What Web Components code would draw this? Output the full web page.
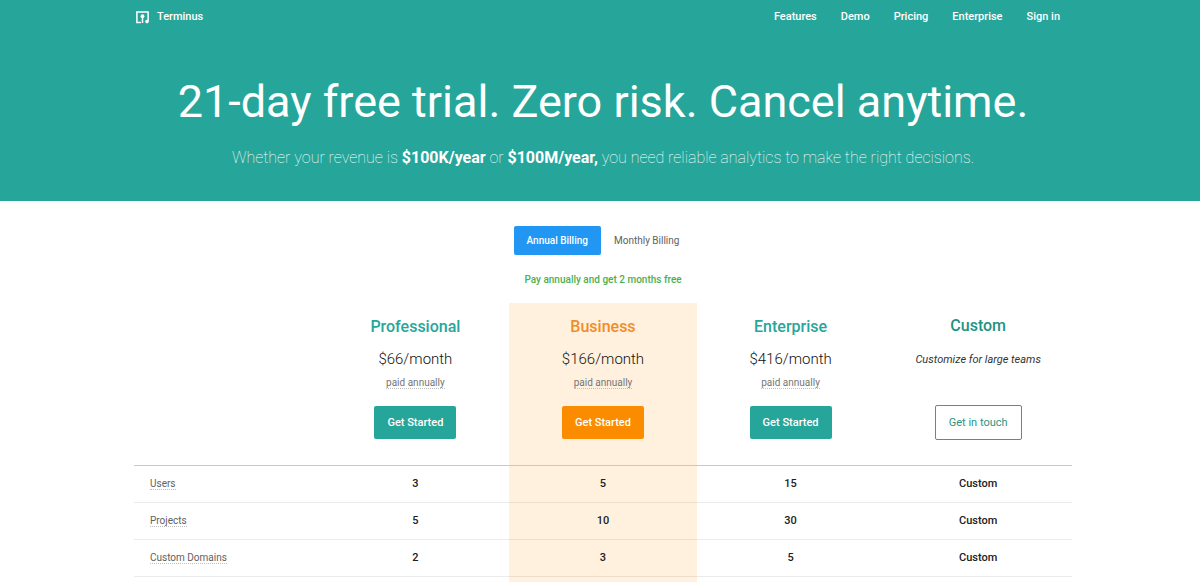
<!DOCTYPE html>
<html lang="en">
<head>
<meta charset="utf-8">
<meta name="viewport" content="width=device-width, initial-scale=1">
<title>Terminus - Pricing</title>
<style>
  body {
    margin: 0;
    background: #fff;
    color: #212121;
    font-family: Roboto, "Liberation Sans", sans-serif;
    font-size: 10px;
    line-height: 16px;
    --teal: #26a69a;
    --orange: #fb8c00;
    --gutter: 6px;
    --content: 938px;
  }
</style>
</head>
<body>
<site-header>
  <a slot="nav" href="#features">Features</a>
  <a slot="nav" href="#demo">Demo</a>
  <a slot="nav" href="#pricing">Pricing</a>
  <a slot="nav" href="#enterprise">Enterprise</a>
  <a slot="nav" href="#signin">Sign in</a>
</site-header>
<main>
  <page-hero>
    <span slot="title">21-day free trial. Zero risk. Cancel anytime.</span>
    Whether your revenue is <b>$100K/year</b> or <b>$100M/year,</b> you need reliable analytics to make the right decisions.
  </page-hero>
  <billing-toggle>Pay annually and get 2 months free</billing-toggle>
  <pricing-table></pricing-table>
</main>

<script>
class SiteHeader extends HTMLElement {
  constructor() {
    super();
    this.attachShadow({ mode: 'open' }).innerHTML = `
      <style>
        :host {
          display: block;
          background: var(--teal);
          color: #fff;
          padding-left: var(--gutter);
        }
        header {
          display: flex;
          justify-content: space-between;
          align-items: center;
          max-width: var(--content);
          height: 34px;
          margin: 0 auto;
        }
        .brand {
          display: flex;
          align-items: center;
          gap: 8px;
          padding-left: 2px;
          color: #fff;
          font-size: 11px;
          font-weight: 500;
          text-decoration: none;
        }
        nav {
          display: flex;
          gap: 24px;
          padding-right: 12px;
        }
        ::slotted(a) {
          color: #fff;
          font-size: 11px;
          font-weight: 500;
          text-decoration: none;
        }
      </style>
      <header>
        <a class="brand" href="#home">
          <svg width="13" height="13" viewBox="0 0 13 13" fill="none" stroke="#fff" stroke-width="1.5" aria-hidden="true">
            <path d="M5 11.4H.9V.9h11.2v9.2"/>
            <path d="M6.5 12V5"/>
            <circle cx="6.5" cy="5.2" r="1.9" fill="#fff" stroke="none"/>
            <circle cx="11" cy="10.6" r="1.8" fill="#fff" stroke="none"/>
          </svg>
          <span>Terminus</span>
        </a>
        <nav><slot name="nav"></slot></nav>
      </header>
    `;
  }
}

class PageHero extends HTMLElement {
  constructor() {
    super();
    this.attachShadow({ mode: 'open' }).innerHTML = `
      <style>
        :host {
          display: block;
          background: var(--teal);
          color: #fff;
          padding: 39px 0 31px var(--gutter);
          text-align: center;
        }
        h1 {
          margin: 0 0 16px;
          font-size: 45px;
          font-weight: 400;
          line-height: 57px;
        }
        p {
          margin: 0;
          font-size: 16px;
          font-weight: 100;
          line-height: 24px;
        }
        ::slotted(b) { font-weight: 700; }
      </style>
      <h1><slot name="title"></slot></h1>
      <p><slot></slot></p>
    `;
  }
}

class BillingToggle extends HTMLElement {
  constructor() {
    super();
    this.attachShadow({ mode: 'open' }).innerHTML = `
      <style>
        :host {
          display: block;
          padding: 25px 0 15px var(--gutter);
          text-align: center;
        }
        .options {
          display: flex;
          justify-content: center;
        }
        button {
          height: 29px;
          padding: 0 13px;
          border: 0;
          border-radius: 2px;
          background: none;
          color: #616161;
          font: 400 10px/16px Roboto, "Liberation Sans", sans-serif;
          cursor: pointer;
        }
        button[aria-pressed="true"] {
          background: #2196f3;
          color: #fff;
          font-weight: 500;
        }
        p {
          margin: 17px 0 0;
          color: #4caf50;
          font-weight: 500;
        }
      </style>
      <div class="options">
        <button type="button" aria-pressed="true">Annual Billing</button>
        <button type="button" aria-pressed="false">Monthly Billing</button>
      </div>
      <p><slot></slot></p>
    `;
  }

  connectedCallback() {
    const buttons = this.shadowRoot.querySelectorAll('button');
    buttons.forEach(button => {
      button.addEventListener('click', () => {
        buttons.forEach(b => b.setAttribute('aria-pressed', String(b === button)));
      });
    });
  }
}

class PlanButton extends HTMLElement {
  constructor() {
    super();
    this.attachShadow({ mode: 'open' }).innerHTML = `
      <style>
        :host { display: block; }
        button {
          height: 33px;
          padding: 0 13px;
          border: 0;
          border-radius: 2px;
          background: var(--teal);
          color: #fff;
          font: 500 11px/16px Roboto, "Liberation Sans", sans-serif;
          cursor: pointer;
          vertical-align: top;
        }
        :host([kind="featured"]) button { background: var(--orange); }
        :host([kind="outline"]) button {
          height: 35px;
          border: 1px solid var(--teal);
          background: #fff;
          color: #2b9485;
          font-weight: 400;
        }
      </style>
      <button type="button"><slot></slot></button>
    `;
  }
}

class PricingTable extends HTMLElement {
  constructor() {
    super();
    this.attachShadow({ mode: 'open' });
  }

  connectedCallback() {
    const plans = [
      { name: 'Professional', price: '$66/month', kind: 'primary' },
      { name: 'Business', price: '$166/month', kind: 'featured' },
      { name: 'Enterprise', price: '$416/month', kind: 'primary' },
      { name: 'Custom', note: 'Customize for large teams', kind: 'outline' }
    ];
    const rows = [
      ['Users', '3', '5', '15', 'Custom'],
      ['Projects', '5', '10', '30', 'Custom'],
      ['Custom Domains', '2', '3', '5', 'Custom']
    ];

    const heads = plans.map(plan => `
      <th scope="col" class="${plan.kind}">
        <div class="name">${plan.name}</div>
        <div class="${plan.price ? 'price' : 'note'}">${plan.price || plan.note}</div>
        <div class="term">${plan.price ? '<span class="hint">paid annually</span>' : ''}</div>
        <plan-button kind="${plan.kind}">${plan.price ? 'Get Started' : 'Get in touch'}</plan-button>
      </th>
    `).join('');

    const body = rows.map(([label, ...values]) => `
      <tr>
        <th scope="row"><span class="hint">${label}</span></th>
        ${values.map(value => `<td>${value}</td>`).join('')}
      </tr>
    `).join('');

    this.shadowRoot.innerHTML = `
      <style>
        :host {
          display: block;
          padding-left: var(--gutter);
        }
        table {
          width: 100%;
          max-width: var(--content);
          margin: 0 auto;
          border-collapse: separate;
          border-spacing: 0;
          table-layout: fixed;
        }
        col.featured { background: #fff1de; }
        th, td {
          padding: 0;
          text-align: center;
          vertical-align: middle;
        }
        thead th, thead td {
          padding: 11px 0 25px;
          border-bottom: 1px solid #c3cbc9;
          font-weight: 400;
        }
        .name {
          margin-bottom: 8px;
          color: var(--teal);
          font-size: 16px;
          font-weight: 500;
          line-height: 24px;
        }
        .featured .name { color: #f28c28; }
        .outline .name { color: #1f9384; }
        .price {
          color: #111;
          font-size: 15px;
          font-weight: 300;
          line-height: 24px;
        }
        .note {
          padding-top: 4px;
          color: #333;
          font-size: 11px;
          font-style: italic;
          line-height: 20px;
        }
        .term {
          height: 16px;
          margin: 4px 0 15px;
          color: #757575;
        }
        .hint { border-bottom: 1px dotted #bdbdbd; }
        tbody th, tbody td {
          height: 36px;
          border-bottom: 1px solid rgba(0, 0, 0, 0.08);
          font-size: 11px;
          font-weight: 500;
        }
        tbody th {
          padding-left: 16px;
          color: #616161;
          font-size: 10px;
          font-weight: 400;
          text-align: left;
        }
        tfoot td { height: 6px; }
      </style>
      <table>
        <colgroup><col><col><col class="featured"><col><col></colgroup>
        <thead><tr><td></td>${heads}</tr></thead>
        <tbody>${body}</tbody>
        <tfoot><tr><td colspan="2"></td><td></td><td colspan="2"></td></tr></tfoot>
      </table>
    `;
  }
}

customElements.define('site-header', SiteHeader);
customElements.define('page-hero', PageHero);
customElements.define('billing-toggle', BillingToggle);
customElements.define('plan-button', PlanButton);
customElements.define('pricing-table', PricingTable);
</script>
</body>
</html>
